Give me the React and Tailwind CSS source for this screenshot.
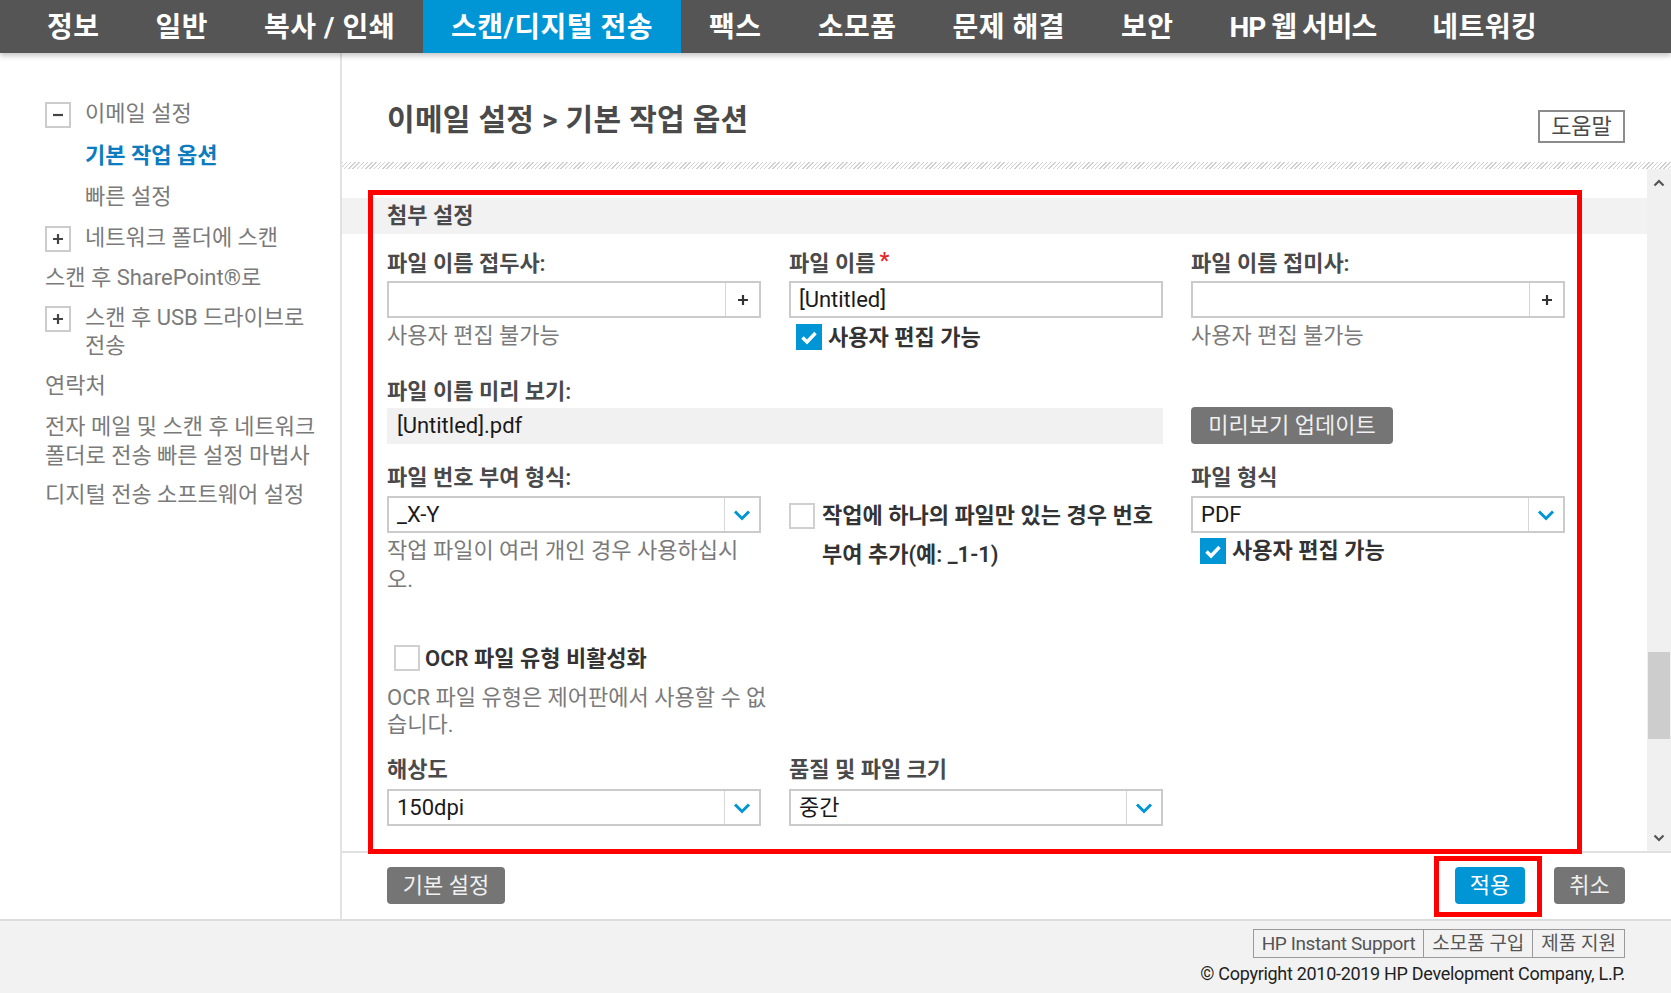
import React from 'react';

const navItems = ['정보', '일반', '복사 / 인쇄', '스캔/디지털 전송', '팩스', '소모품', '문제 해결', '보안', 'HP 웹 서비스', '네트워킹'];

const Check = ({ checked }) =>
  checked ? (
    <span className="flex h-[26px] w-[26px] shrink-0 items-center justify-center bg-[#0096d6]">
      <svg width="20" height="20" viewBox="0 0 20 20">
        <path d="M3.5 10.5l4.5 4.5 8.5-9" fill="none" stroke="#fff" strokeWidth="3.4" />
      </svg>
    </span>
  ) : (
    <span className="block h-[26px] w-[26px] shrink-0 border-2 border-[#d0d0d0] bg-white" />
  );

const TreeBox = ({ open }) => (
  <span className="mt-[2px] flex h-[26px] w-[26px] shrink-0 items-center justify-center border-2 border-[#cccccc]">
    <svg width="12" height="12" viewBox="0 0 12 12">
      <path d={open ? 'M1 6h10' : 'M6 1v10M1 6h10'} stroke="#444" strokeWidth="2.2" />
    </svg>
  </span>
);

const PlusInput = ({ value }) => (
  <div className="mt-[3px] flex h-[37px] border-2 border-[#cbcbcb] bg-white">
    <div className="flex-1 pl-[8px] leading-[33px] text-[#1a1a1a]">{value}</div>
    <div className="flex w-[34px] items-center justify-center border-l border-[#d6d6d6]">
      <svg width="12" height="12" viewBox="0 0 12 12">
        <path d="M6 1v10M1 6h10" stroke="#333" strokeWidth="2.2" />
      </svg>
    </div>
  </div>
);

const Select = ({ value, top }) => (
  <div className={`flex h-[37px] border-2 border-[#cbcbcb] bg-white ${top}`}>
    <div className="flex-1 pl-[8px] leading-[33px] text-[#1a1a1a]">{value}</div>
    <div className="flex w-[35px] items-center justify-center border-l border-[#d6d6d6]">
      <svg width="18" height="12" viewBox="0 0 18 12">
        <path d="M2 2.5l7 7 7-7" fill="none" stroke="#0096d6" strokeWidth="3" />
      </svg>
    </div>
  </div>
);

const Label = ({ children }) => (
  <div className="h-[28px] font-semibold leading-[28px] text-[#4a4a4a]">{children}</div>
);

const Sidebar = () => (
  <aside className="w-[342px] shrink-0 border-r-2 border-[#e2e2e2] pl-[45px] pt-[47px] text-[22px] leading-[28px] text-[#7a7a7a]">
    <div className="flex gap-[14px]">
      <TreeBox open />
      <span>이메일 설정</span>
    </div>
    <div className="mt-[14px] pl-[40px] font-semibold text-[#0a7cbf]">기본 작업 옵션</div>
    <div className="mt-[13px] pl-[40px]">빠른 설정</div>
    <div className="mt-[13px] flex gap-[14px]">
      <TreeBox />
      <span>네트워크 폴더에 스캔</span>
    </div>
    <div className="mt-[12px]">스캔 후 SharePoint®로</div>
    <div className="mt-[12px] flex gap-[14px]">
      <TreeBox />
      <span>
        스캔 후 USB 드라이브로
        <br />
        전송
      </span>
    </div>
    <div className="mt-[12px]">연락처</div>
    <div className="mt-[12px] leading-[29px]">
      전자 메일 및 스캔 후 네트워크
      <br />
      폴더로 전송 빠른 설정 마법사
    </div>
    <div className="mt-[11px]">디지털 전송 소프트웨어 설정</div>
  </aside>
);

const Form = () => (
  <div className="w-[1178px] text-[22px]">
    <div className="grid grid-cols-3 gap-x-[28px] pt-[16px]">
      <div>
        <Label>파일 이름 접두사:</Label>
        <PlusInput />
        <div className="mt-[4px] leading-[28px] text-[#7a7a7a]">사용자 편집 불가능</div>
      </div>
      <div>
        <Label>
          파일 이름<span className="relative -top-[3px] ml-[4px] text-[#e4262c]">*</span>
        </Label>
        <div className="mt-[3px] h-[37px] border-2 border-[#cbcbcb] bg-white pl-[8px] leading-[33px] text-[#1a1a1a]">[Untitled]</div>
        <div className="mt-[6px] flex h-[26px] items-center gap-[6px] pl-[7px] font-semibold text-[#333]">
          <Check checked />
          <span>사용자 편집 가능</span>
        </div>
      </div>
      <div>
        <Label>파일 이름 접미사:</Label>
        <PlusInput />
        <div className="mt-[4px] leading-[28px] text-[#7a7a7a]">사용자 편집 불가능</div>
      </div>
    </div>

    <div className="mt-[28px] grid grid-cols-3 gap-x-[28px]">
      <div className="col-span-2">
        <Label>파일 이름 미리 보기:</Label>
        <div className="mt-[2px] h-[36px] bg-[#f1f1f1] pl-[10px] leading-[36px] text-[#1a1a1a]">[Untitled].pdf</div>
      </div>
      <div className="flex flex-col justify-end">
        <button className="h-[37px] w-[202px] rounded-[4px] bg-[#757575] leading-[37px] text-[#f0f0f0]">미리보기 업데이트</button>
      </div>
    </div>

    <div className="mt-[20px] grid grid-cols-3 gap-x-[28px]">
      <div>
        <Label>파일 번호 부여 형식:</Label>
        <Select value="_X-Y" top="mt-[4px]" />
        <div className="mt-[3px] whitespace-nowrap leading-[29px] text-[#7a7a7a]">
          작업 파일이 여러 개인 경우 사용하십시
          <br />
          오.
        </div>
      </div>
      <div className="flex items-start gap-[7px] pt-[32px]">
        <div className="mt-[7px]">
          <Check />
        </div>
        <div className="whitespace-nowrap font-semibold leading-[39px] text-[#333]">
          작업에 하나의 파일만 있는 경우 번호
          <br />
          부여 추가(예: _1-1)
        </div>
      </div>
      <div>
        <Label>파일 형식</Label>
        <Select value="PDF" top="mt-[4px]" />
        <div className="mt-[4px] flex h-[27px] items-center gap-[6px] pl-[9px] font-semibold text-[#333]">
          <Check checked />
          <span>사용자 편집 가능</span>
        </div>
      </div>
    </div>

    <div className="mt-[51px] flex h-[26px] items-center gap-[5px] pl-[7px] font-semibold text-[#333]">
      <Check />
      <span>OCR 파일 유형 비활성화</span>
    </div>
    <div className="mt-[13px] whitespace-nowrap leading-[27px] text-[#7a7a7a]">
      OCR 파일 유형은 제어판에서 사용할 수 없
      <br />
      습니다.
    </div>

    <div className="mt-[18px] grid grid-cols-3 gap-x-[28px]">
      <div>
        <Label>해상도</Label>
        <Select value="150dpi" top="mt-[5px]" />
      </div>
      <div>
        <Label>품질 및 파일 크기</Label>
        <Select value="중간" top="mt-[5px]" />
      </div>
    </div>
  </div>
);

const Scrollbar = () => (
  <div className="flex w-[24px] shrink-0 flex-col items-center bg-[#f0f0f0]">
    <svg className="mt-[9px]" width="12" height="10" viewBox="0 0 12 10">
      <path d="M1.5 7.5L6 3l4.5 4.5" fill="none" stroke="#555" strokeWidth="2.2" />
    </svg>
    <div className="mt-[464px] h-[87px] w-[22px] bg-[#cdcdcd]" />
    <svg className="mt-[94px]" width="12" height="10" viewBox="0 0 12 10">
      <path d="M1.5 2.5L6 7l4.5-4.5" fill="none" stroke="#555" strokeWidth="2.2" />
    </svg>
  </div>
);

export default function App() {
  return (
    <div className="relative flex h-[993px] w-full flex-col overflow-hidden bg-white [font-family:'Roboto','Noto_Sans_CJK_KR',sans-serif]">
      <nav className="relative z-10 flex h-[53px] shrink-0 bg-[#555555] pl-[19px] shadow-[0_3px_5px_rgba(0,0,0,0.22)]">
        {navItems.map((item) => (
          <div
            key={item}
            className={`whitespace-nowrap px-[28px] pt-[2px] text-[28px] font-bold leading-[51px] text-white ${item === '스캔/디지털 전송' ? 'bg-[#0096d6]' : ''} ${item === 'HP 웹 서비스' ? 'tracking-[-1px]' : 'tracking-[0.5px]'}`}
          >
            {item}
          </div>
        ))}
      </nav>

      <div className="flex min-h-0 flex-1">
        <Sidebar />
        <main className="flex min-w-0 flex-1 flex-col">
          <div className="flex h-[109px] shrink-0 items-start justify-between pl-[45px] pr-[46px] pt-[47px]">
            <h1 className="text-[30px] font-semibold leading-[40px] tracking-[0.3px] text-[#4a4a4a]">이메일 설정 &gt; 기본 작업 옵션</h1>
            <button className="mt-[10px] h-[33px] w-[87px] border-2 border-[#8c8c8c] bg-white text-[22px] leading-[29px] text-[#4a4a4a]">도움말</button>
          </div>
          <div className="h-[7px] shrink-0 bg-[repeating-linear-gradient(135deg,#d0d0d0_0px,#d0d0d0_1px,#ffffff_1px,#ffffff_3px)]" />
          <div className="flex h-[682px] shrink-0">
            <div className="min-w-0 flex-1 overflow-hidden pt-[29px]">
              <div className="h-[36px] bg-[#f2f2f2] pl-[45px] text-[22px] font-semibold leading-[36px] text-[#4a4a4a]">첨부 설정</div>
              <div className="pl-[45px]">
                <Form />
              </div>
            </div>
            <Scrollbar />
          </div>
          <div className="flex flex-1 items-start justify-between border-t-2 border-[#e0e0e0] pl-[45px] pr-[46px] pt-[14px] text-[22px]">
            <button className="h-[37px] w-[118px] rounded-[4px] bg-[#757575] text-[#f0f0f0]">기본 설정</button>
            <div className="flex gap-[29px]">
              <button className="h-[37px] w-[70px] rounded-[4px] bg-[#0096d6] text-white">적용</button>
              <button className="h-[37px] w-[71px] rounded-[4px] bg-[#757575] text-[#f0f0f0]">취소</button>
            </div>
          </div>
        </main>
      </div>

      <footer className="flex h-[74px] shrink-0 flex-col items-end border-t-2 border-[#dcdcdc] bg-[#f2f2f2] pr-[46px] pt-[8px]">
        <div className="flex h-[29px] text-[19px] text-[#555]">
          <span className="border border-[#9a9a9a] px-[8px] leading-[27px] tracking-[-0.4px]">HP Instant Support</span>
          <span className="-ml-px border border-[#9a9a9a] px-[8px] leading-[27px]">소모품 구입</span>
          <span className="-ml-px border border-[#9a9a9a] px-[8px] leading-[27px]">제품 지원</span>
        </div>
        <div className="mt-[2px] text-[18px] leading-[28px] tracking-[-0.3px] text-[#222]">© Copyright 2010-2019 HP Development Company, L.P.</div>
      </footer>

      <div className="pointer-events-none absolute left-[368px] top-[190px] h-[664px] w-[1214px] border-[5px] border-[#ff0000]" />
      <div className="pointer-events-none absolute left-[1434px] top-[856px] h-[61px] w-[108px] border-[5px] border-[#ff0000]" />
    </div>
  );
}
